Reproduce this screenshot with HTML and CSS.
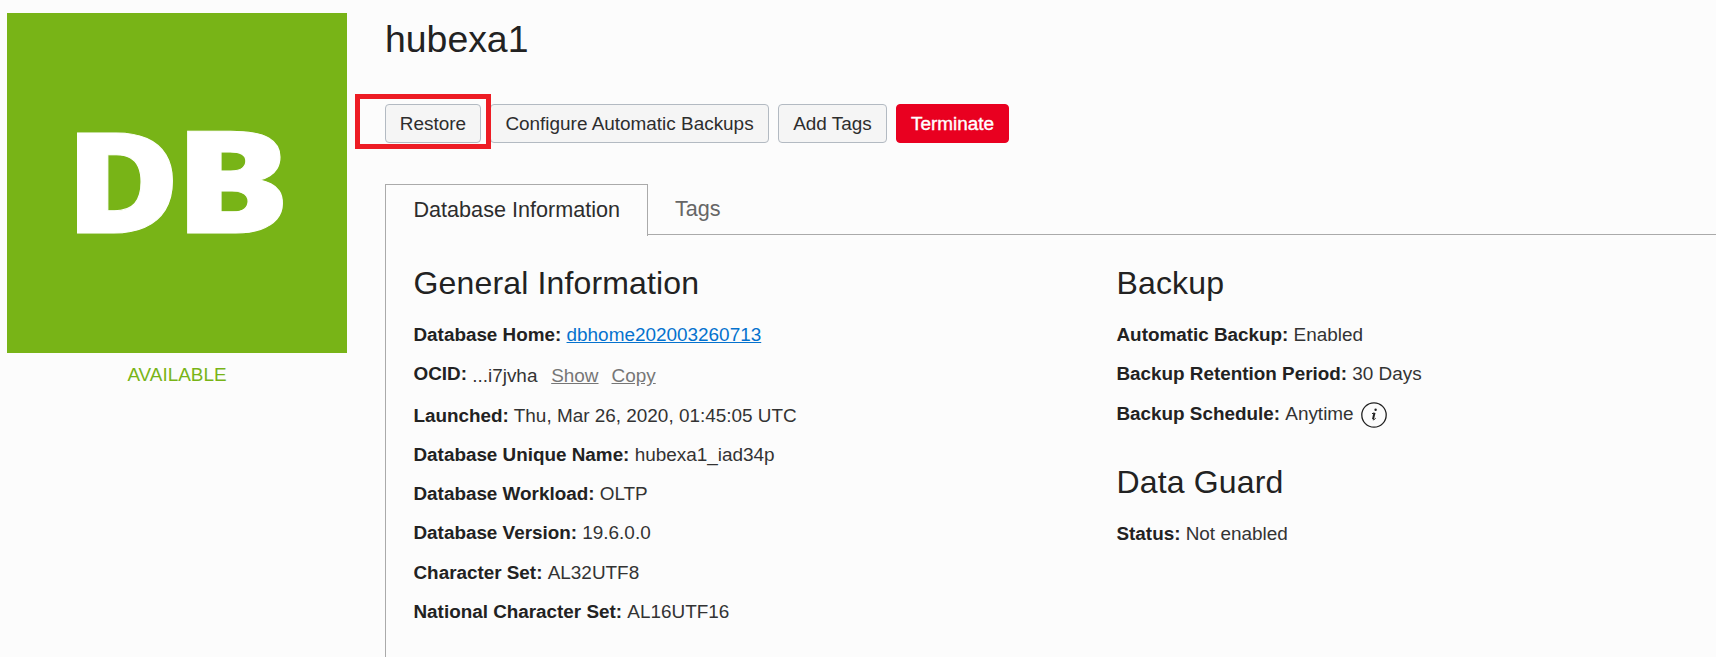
FILE: index.html
```
<!DOCTYPE html>
<html lang="en">
<head>
<meta charset="utf-8">
<title>hubexa1</title>
<link rel="stylesheet" href="styles.css">
</head>
<body>
<div class="page">
  <aside class="status">
    <svg class="tile" viewBox="0 0 340 340" width="340" height="340">
      <text class="tile-text" transform="translate(58.500 219.500) scale(1.11 1)">D</text>
      <text class="tile-text" transform="translate(167.500 219.500) scale(1.22 1)">B</text>
    </svg>
    <div class="state">AVAILABLE</div>
  </aside>
  <main class="main">
    <h1 class="title">hubexa1</h1>
    <div class="actions">
      <div class="highlighted"><button class="btn">Restore</button></div>
      <button class="btn">Configure Automatic Backups</button>
      <button class="btn">Add Tags</button>
      <button class="btn btn-danger">Terminate</button>
    </div>
    <nav class="tabs">
      <a class="tab tab-active">Database Information</a>
      <a class="tab">Tags</a>
    </nav>
    <div class="panel">
      <section class="column">
        <h2 class="heading">General Information</h2>
        <div class="row"><b>Database Home:</b> <a class="link">dbhome202003260713</a></div>
        <div class="row row-ocid"><b>OCID:</b> <span class="ocid">...i7jvha <a class="minor">Show</a><a class="minor">Copy</a></span></div>
        <div class="row"><b>Launched:</b> Thu, Mar 26, 2020, 01:45:05 UTC</div>
        <div class="row"><b>Database Unique Name:</b> hubexa1_iad34p</div>
        <div class="row"><b>Database Workload:</b> OLTP</div>
        <div class="row"><b>Database Version:</b> 19.6.0.0</div>
        <div class="row"><b>Character Set:</b> <span class="value">AL32UTF8</span></div>
        <div class="row"><b>National Character Set:</b> <span class="value">AL16UTF16</span></div>
      </section>
      <section class="column">
        <h2 class="heading">Backup</h2>
        <div class="row"><b>Automatic Backup:</b> Enabled</div>
        <div class="row"><b>Backup Retention Period:</b> 30 Days</div>
        <div class="row row-info"><span><b>Backup Schedule:</b> <span class="value">Anytime</span></span>
          <svg class="info" viewBox="0 0 26 26" width="26" height="26"><circle cx="13" cy="13" r="12.2" fill="none" stroke="#222" stroke-width="1.3"/><circle cx="14.600" cy="7.8" r="1.2" fill="#222"/><path d="M11 11.600 L12.900 11.200" fill="none" stroke="#222" stroke-width="1"/><path d="M13.500 10.800 L12 17.200" fill="none" stroke="#222" stroke-width="2"/><path d="M11.900 17.900 Q12.800 18.200 14.700 16.300" fill="none" stroke="#222" stroke-width="1"/></svg>
        </div>
        <h2 class="heading heading-next">Data Guard</h2>
        <div class="row"><b>Status:</b> Not enabled</div>
      </section>
    </div>
  </main>
</div>
</body>
</html>
```
FILE: styles.css
```
* { box-sizing: border-box; }
html { height: 657px; overflow: hidden; }
body {
  margin: 0;
  height: 657px;
  overflow: hidden;
  background: #fcfcfc;
  color: #333;
  font: 18.93px/39.4px "Liberation Sans", Arial, sans-serif;
}
b { color: #222; font-size: 18.87px; }
.page { display: flex; height: 657px; padding-left: 7px; }
.status { flex: 0 0 340px; padding-top: 13px; }
.tile { display: block; background: #78b417; }
.tile-text {
  fill: #fff;
  stroke: #fff;
  stroke-width: 1px;
  font: 800 141px "Open Sans", sans-serif;
}
.state { margin-top: 2px; text-align: center; color: #78b417; }
.main {
  display: flex;
  flex: 1;
  flex-direction: column;
  margin-left: 38px;
}
.title { margin: 17px 0 0; color: #222; font-size: 37.4px; font-weight: 400; line-height: 44px; }
.actions {
  display: grid;
  grid-template-columns: 96px 279px 109px 113px;
  gap: 9px;
  margin-top: 43px;
}
.highlighted { position: relative; display: grid; }
.highlighted::after {
  content: "";
  position: absolute;
  z-index: 1;
  inset: -10px -10px -6px -30px;
  border: 5px solid #ed1c24;
}
.btn {
  height: 39px;
  padding: 0;
  border: 1px solid #b3bac2;
  border-radius: 4px;
  background: #f5f5f5;
  color: #2d2d2d;
  font: inherit;
  line-height: 37px;
  white-space: nowrap;
}
.btn-danger {
  border-color: #e90020;
  background: #e90020;
  color: #fff;
  -webkit-text-stroke: .4px #fff;
}
.tabs { display: flex; height: 51px; margin-top: 41px; }
.tab {
  flex: 1;
  height: 51px;
  padding-left: 27px;
  border-bottom: 1px solid #aaa;
  color: #666;
  font-size: 21.6px;
  line-height: 50px;
}
.tab-active {
  flex: 0 0 263px;
  height: 52px;
  border: 1px solid #aaa;
  border-bottom: 0;
  padding-left: 27.5px;
  color: #2d2d2d;
}
.panel {
  display: grid;
  flex: 1;
  min-height: 0;
  grid-template-columns: 703px 1fr;
  padding: 28px 0 0 27.5px;
  border-left: 1px solid #aaa;
}
.heading { margin: 0 0 12px; color: #222; font-size: 32px; font-weight: 400; line-height: 40px; letter-spacing: .15px; }
.heading-next { margin-top: 29px; margin-bottom: 12.4px; }
.row { height: 39.3px; white-space: nowrap; }
.row-ocid { height: 41.3px; }
.ocid { position: relative; top: 2px; }
.value { display: inline-block; }
.row-info { display: flex; gap: 7px; }
.info { margin-top: 8px; }
.link { color: #0572ce; text-decoration: underline; }
.minor { margin-left: 8.5px; color: #767676; text-decoration: underline; }
.minor + .minor { margin-left: 13px; }
```
